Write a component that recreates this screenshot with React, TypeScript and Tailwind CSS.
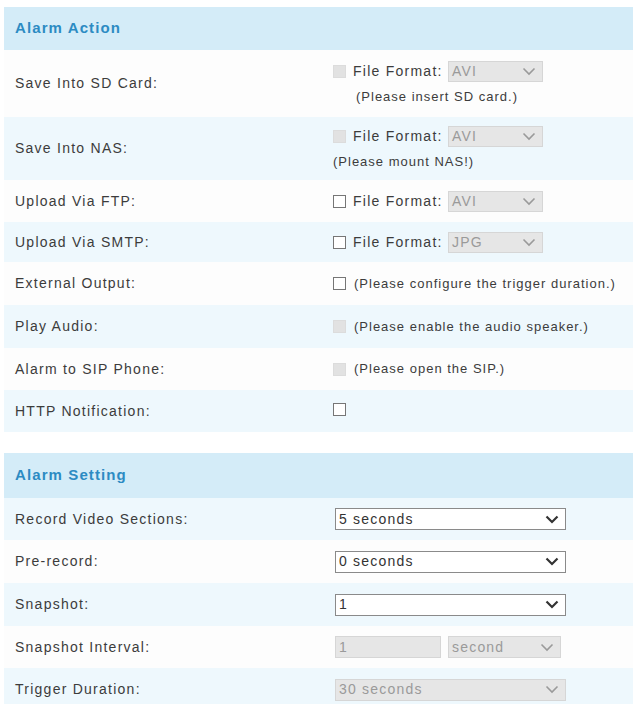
import React from "react";

function Chevron({ dark }: { dark?: boolean }) {
  return (
    <svg width="14" height="9" viewBox="0 0 14 9" className="shrink-0">
      <path
        d="M1.5 1.5 L7 7 L12.5 1.5"
        fill="none"
        stroke={dark ? "#333" : "#9a9a9a"}
        strokeWidth={dark ? 2.2 : 1.6}
      />
    </svg>
  );
}

function Check({ disabled }: { disabled?: boolean }) {
  return disabled ? (
    <span className="inline-block w-[13px] h-[13px] bg-[#e2e2e2] border border-[#dcdcdc] shrink-0" />
  ) : (
    <span className="inline-block w-[13px] h-[13px] bg-white border border-[#767676] shrink-0" />
  );
}

function SmallSelect({ value }: { value: string }) {
  return (
    <div className="flex items-center justify-between w-[95px] h-[21px] bg-[#e6e6e6] border border-[#d6d6d6] pl-[3px] pr-[6px] text-[14px] tracking-[1.2px] text-[#9a9a9a]">
      <span>{value}</span>
      <Chevron />
    </div>
  );
}

function WideSelect({ value, disabled }: { value: string; disabled?: boolean }) {
  return (
    <div
      className={
        disabled
          ? "ml-[2px] flex items-center justify-between w-[231px] h-[22px] bg-[#e6e6e6] border border-[#d6d6d6] pl-[3px] pr-[6px] text-[14px] tracking-[1.2px] text-[#9a9a9a]"
          : "ml-[2px] flex items-center justify-between w-[231px] h-[22px] bg-white border border-[#8a8a8a] pl-[3px] pr-[6px] text-[14px] tracking-[1.2px] text-[#333]"
      }
    >
      <span>{value}</span>
      <Chevron dark={!disabled} />
    </div>
  );
}

function FileFormat({ value, disabled }: { value: string; disabled?: boolean }) {
  return (
    <div className="flex items-center">
      <Check disabled={disabled} />
      <span className="ml-[7px] mr-[6px] w-[89px] whitespace-nowrap text-[14px] tracking-[1.25px] text-[#3c3c3c]">
        File Format:
      </span>
      <SmallSelect value={value} />
    </div>
  );
}

function Row({
  label,
  h,
  blue,
  children,
}: {
  label: string;
  h: string;
  blue?: boolean;
  children?: React.ReactNode;
}) {
  return (
    <div className={`flex items-center ${h} ${blue ? "bg-[#eef8fd]" : "bg-[#fdfdfd]"}`}>
      <div className="w-[329px] pl-[11px] text-[14px] tracking-[1.25px] text-[#3c3c3c] shrink-0 whitespace-nowrap">
        {label}
      </div>
      <div className="flex-1">{children}</div>
    </div>
  );
}

function Header({ title, h }: { title: string; h: string }) {
  return (
    <div
      className={`${h} flex items-center bg-[#d4ecf8] pl-[11px] text-[15px] tracking-[1.1px] font-bold text-[#2c8bc3]`}
    >
      {title}
    </div>
  );
}

function Note({ disabled, text }: { disabled?: boolean; text: string }) {
  return (
    <div className="flex items-center gap-[8px] text-[13px] tracking-[1px] text-[#3c3c3c] whitespace-nowrap">
      <Check disabled={disabled} />
      <span>{text}</span>
    </div>
  );
}

export default function App() {
  return (
    <div
      className="w-[640px] h-[704px] overflow-hidden bg-white pt-[7px] pl-[4px] pr-[7px]"
      style={{ fontFamily: '"Liberation Sans", Arial, sans-serif' }}
    >
      <Header title="Alarm Action" h="h-[43px]" />
      <Row label="Save Into SD Card:" h="h-[67px]">
        <div className="flex flex-col">
          <FileFormat value="AVI" disabled />
          <div className="ml-[23px] mt-[5px] text-[13px] tracking-[1px] text-[#3c3c3c]">
            (Please insert SD card.)
          </div>
        </div>
      </Row>
      <Row label="Save Into NAS:" h="h-[63px]" blue>
        <div className="flex flex-col">
          <FileFormat value="AVI" disabled />
          <div className="mt-[5px] text-[13px] tracking-[1px] text-[#3c3c3c]">(Please mount NAS!)</div>
        </div>
      </Row>
      <Row label="Upload Via FTP:" h="h-[42px]">
        <FileFormat value="AVI" />
      </Row>
      <Row label="Upload Via SMTP:" h="h-[40px]" blue>
        <FileFormat value="JPG" />
      </Row>
      <Row label="External Output:" h="h-[43px]">
        <Note text="(Please configure the trigger duration.)" />
      </Row>
      <Row label="Play Audio:" h="h-[43px]" blue>
        <Note disabled text="(Please enable the audio speaker.)" />
      </Row>
      <Row label="Alarm to SIP Phone:" h="h-[42px]">
        <Note disabled text="(Please open the SIP.)" />
      </Row>
      <Row label="HTTP Notification:" h="h-[42px]" blue>
        <Check />
      </Row>
      <div className="h-[21px]" />
      <Header title="Alarm Setting" h="h-[45px]" />
      <Row label="Record Video Sections:" h="h-[42px]" blue>
        <WideSelect value="5 seconds" />
      </Row>
      <Row label="Pre-record:" h="h-[43px]">
        <WideSelect value="0 seconds" />
      </Row>
      <Row label="Snapshot:" h="h-[43px]" blue>
        <WideSelect value="1" />
      </Row>
      <Row label="Snapshot Interval:" h="h-[42px]">
        <div className="ml-[2px] flex items-center gap-[7px]">
          <div className="w-[106px] h-[22px] bg-[#e6e6e6] border border-[#d6d6d6] pl-[3px] text-[14px] text-[#9a9a9a] flex items-center">
            1
          </div>
          <div className="flex items-center justify-between w-[113px] h-[22px] bg-[#e6e6e6] border border-[#d6d6d6] pl-[3px] pr-[6px] text-[14px] tracking-[1.2px] text-[#9a9a9a]">
            <span>second</span>
            <Chevron />
          </div>
        </div>
      </Row>
      <Row label="Trigger Duration:" h="h-[43px]" blue>
        <WideSelect value="30 seconds" disabled />
      </Row>
    </div>
  );
}
